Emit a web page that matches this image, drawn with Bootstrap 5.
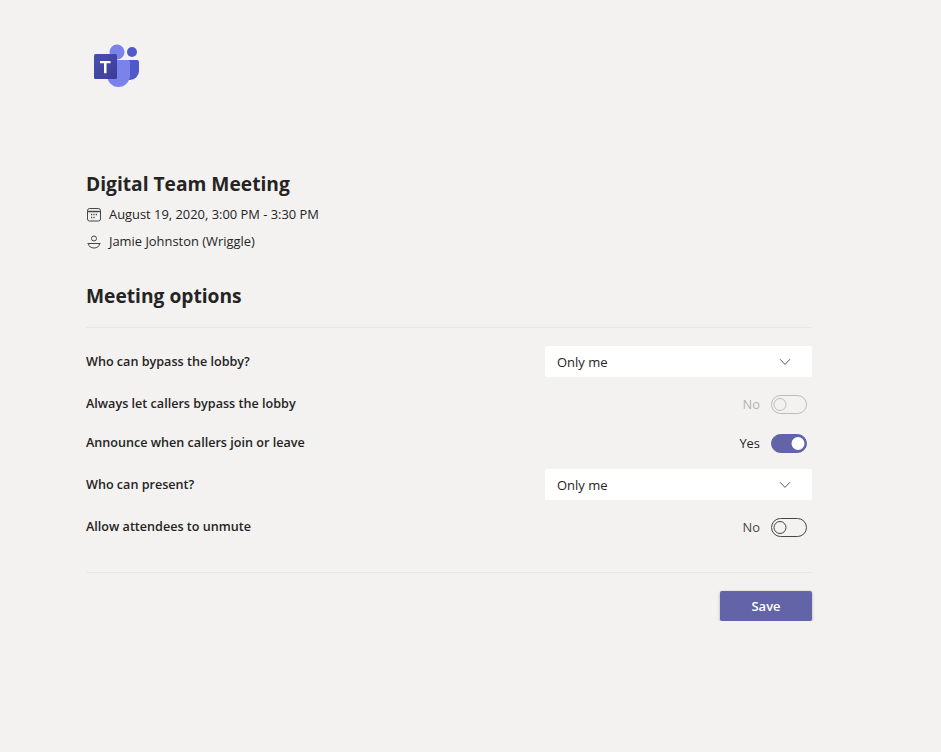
<!DOCTYPE html>
<html lang="en">
<head>
    <meta charset="UTF-8">
    <meta name="viewport" content="width=device-width, initial-scale=1.0">
    <title>Meeting options</title>
    <link href="https://cdn.jsdelivr.net/npm/bootstrap@5.3.0/dist/css/bootstrap.min.css" rel="stylesheet">
    <style>
        body {
            background: #f3f2f1;
            color: #252423;
            font-family: "Open Sans", "Noto Sans", sans-serif;
            font-size: 12.9px;
        }
        .page-wrap {
            width: 726px;
            margin-left: 86px;
            padding-top: 42px;
        }
        .teams-logo {
            display: block;
            margin-left: 6px;
            margin-bottom: 82px;
        }
        .meeting-title {
            font-size: 19.2px;
            font-weight: 700;
            line-height: 28px;
            margin-bottom: 3px;
        }
        .meeting-info {
            height: 27px;
            gap: 7px;
            color: #252423;
        }
        .options-title {
            font-size: 19.2px;
            font-weight: 700;
            line-height: 28px;
            margin: 27px 0 17px;
        }
        .rule {
            border-top: 1px solid #e9e8e7;
        }
        .option-rows {
            padding: 12px 0 25px;
        }
        .option-row {
            height: 39px;
        }
        .option-row.has-select {
            height: 45px;
        }
        .option-label {
            font-weight: 600;
            font-size: 12.6px;
        }
        .option-select {
            width: 267px;
            height: 31px;
            margin-bottom: 2px;
            border: 0;
            border-radius: 2px;
            font-size: 13px;
            color: #252423;
            padding: 3px 12px 0;
            background-color: #fff;
            background-image: url("data:image/svg+xml,%3csvg xmlns='http://www.w3.org/2000/svg' viewBox='0 0 12 8'%3e%3cpath fill='none' stroke='%23484644' stroke-width='.9' d='M1 1.2l5 5.2 5-5.2'/%3e%3c/svg%3e");
            background-position: right 21px center;
            background-size: 12px 8px;
        }
        .switch-wrap {
            gap: 11px;
            min-height: 0;
            margin: 0;
            padding: 0 5px 0 0;
        }
        .switch-wrap .form-check-input {
            width: 36px;
            height: 19px;
            margin: 0;
            float: none;
            border: 1px solid #484644;
            background-color: transparent;
            background-position: left center;
            background-size: 19px 17px;
            background-image: url("data:image/svg+xml,%3csvg xmlns='http://www.w3.org/2000/svg' viewBox='0 0 19 17'%3e%3ccircle cx='8' cy='8.5' r='6' fill='none' stroke='%23484644'/%3e%3c/svg%3e");
            box-shadow: none;
        }
        .switch-wrap .form-check-input:checked {
            background-color: #6264a7;
            border-color: #6264a7;
            background-position: right center;
            background-image: url("data:image/svg+xml,%3csvg xmlns='http://www.w3.org/2000/svg' viewBox='0 0 19 17'%3e%3ccircle cx='11' cy='8.5' r='6.5' fill='%23fff'/%3e%3c/svg%3e");
        }
        .switch-wrap .form-check-input:disabled {
            opacity: 1;
            border-color: #bdbbb9;
            background-image: url("data:image/svg+xml,%3csvg xmlns='http://www.w3.org/2000/svg' viewBox='0 0 19 17'%3e%3ccircle cx='8' cy='8.5' r='6' fill='none' stroke='%23bdbbb9'/%3e%3c/svg%3e");
        }
        .switch-text {
            color: #484644;
        }
        .switch-text.is-off {
            color: #b5b3b1;
        }
        .switch-text.is-on {
            color: #252423;
        }
        .save-btn {
            width: 92px;
            height: 30px;
            margin-top: 18px;
            padding: 2px 0 0;
            border: 0;
            border-radius: 2px;
            background: #6264a7;
            color: #fff;
            font-size: 13px;
            font-weight: 600;
            box-shadow: 0 1px 3px rgba(0,0,0,.3);
        }
    </style>
</head>
<body>
    <div class="page-wrap">
        <svg class="teams-logo" width="48" height="46" viewBox="0 0 48 46">
            <defs>
                <linearGradient id="tileGrad" x1="0" y1="0" x2="1" y2="1">
                    <stop offset="0" stop-color="#4a4fb0"/>
                    <stop offset="1" stop-color="#3a3c96"/>
                </linearGradient>
            </defs>
            <circle cx="40" cy="10" r="5" fill="#5059c9"/>
            <path d="M36 18h9a2 2 0 0 1 2 2v9a9 9 0 0 1-9 9h-2z" fill="#5059c9"/>
            <circle cx="25" cy="10" r="7.500" fill="#7b83eb"/>
            <path d="M15 18h21a2 2 0 0 1 2 2v13a11.500 12 0 0 1-23 0z" fill="#7b83eb"/>
            <rect x="2" y="12" width="23" height="25" rx="1.500" fill="url(#tileGrad)"/>
            <path d="M8 19h10.500v2.200h-4v10h-2.500v-10H8z" fill="#fff"/>
        </svg>

        <div class="meeting-title">Digital Team Meeting</div>
        <div class="meeting-info d-flex align-items-center">
            <svg width="16" height="16" viewBox="0 0 16 16" fill="none" stroke="#484644">
                <rect x="1.500" y="1.500" width="13" height="12.500" rx="2"/>
                <path d="M1.500 4.500h13" stroke-width="1.500"/>
                <path d="M5 7.500h1.200M7.400 7.500h1.200M9.800 7.500h1.200M5 10.500h1.200M7.400 10.500h1.200" stroke-width="1.400"/>
            </svg>
            <span>August 19, 2020, 3:00 PM - 3:30 PM</span>
        </div>
        <div class="meeting-info d-flex align-items-center">
            <svg width="16" height="16" viewBox="0 0 16 16" fill="none" stroke="#484644">
                <circle cx="8" cy="4.500" r="2.500"/>
                <path d="M1.500 9.500h13M2.500 9.500c0 3 2.500 4.500 5.500 4.500s5.500-1.500 5.500-4.500"/>
            </svg>
            <span>Jamie Johnston (Wriggle)</span>
        </div>

        <div class="options-title">Meeting options</div>
        <div class="rule"></div>

        <div class="option-rows">
            <div class="option-row has-select d-flex align-items-center justify-content-between">
                <span class="option-label">Who can bypass the lobby?</span>
                <select class="form-select option-select"><option>Only me</option></select>
            </div>
            <div class="option-row d-flex align-items-center justify-content-between">
                <span class="option-label">Always let callers bypass the lobby</span>
                <div class="form-check form-switch switch-wrap d-flex align-items-center">
                    <span class="switch-text is-off">No</span>
                    <input class="form-check-input" type="checkbox" role="switch" disabled>
                </div>
            </div>
            <div class="option-row d-flex align-items-center justify-content-between">
                <span class="option-label">Announce when callers join or leave</span>
                <div class="form-check form-switch switch-wrap d-flex align-items-center">
                    <span class="switch-text is-on">Yes</span>
                    <input class="form-check-input" type="checkbox" role="switch" checked>
                </div>
            </div>
            <div class="option-row has-select d-flex align-items-center justify-content-between">
                <span class="option-label">Who can present?</span>
                <select class="form-select option-select"><option>Only me</option></select>
            </div>
            <div class="option-row d-flex align-items-center justify-content-between">
                <span class="option-label">Allow attendees to unmute</span>
                <div class="form-check form-switch switch-wrap d-flex align-items-center">
                    <span class="switch-text">No</span>
                    <input class="form-check-input" type="checkbox" role="switch">
                </div>
            </div>
        </div>

        <div class="rule"></div>
        <div class="d-flex justify-content-end">
            <button class="btn save-btn" type="button">Save</button>
        </div>
    </div>
    <script src="https://cdn.jsdelivr.net/npm/bootstrap@5.3.0/dist/js/bootstrap.bundle.min.js"></script>
</body>
</html>
